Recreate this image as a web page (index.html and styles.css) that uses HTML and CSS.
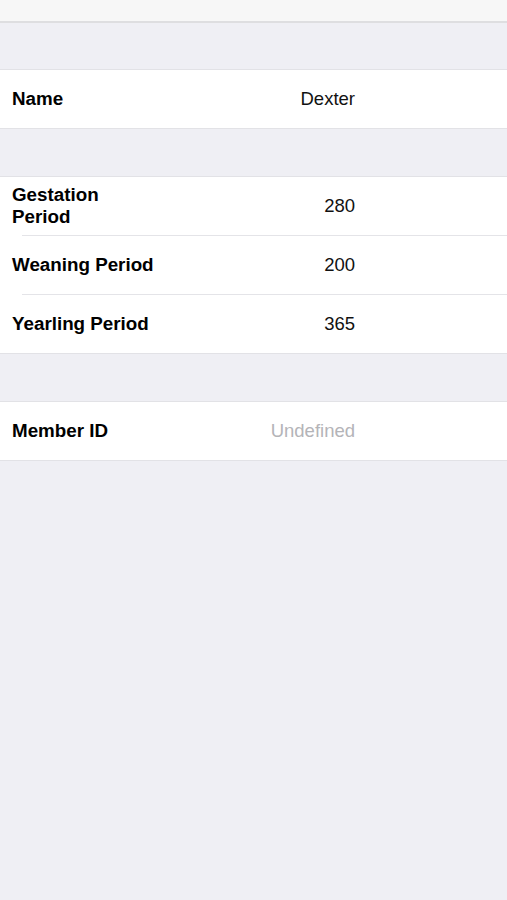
FILE: index.html
```html
<!DOCTYPE html>
<html>
<head>
<meta charset="utf-8">
<link rel="stylesheet" href="styles.css">
</head>
<body>
<div class="topbar"></div>
<div class="section first">
  <div class="row"><div class="label">Name</div><div class="value">Dexter</div></div>
</div>
<div class="section">
  <div class="row"><div class="label">Gestation Period</div><div class="value">280</div></div>
  <div class="row sep"><div class="label">Weaning Period</div><div class="value">200</div></div>
  <div class="row sep"><div class="label">Yearling Period</div><div class="value">365</div></div>
</div>
<div class="section">
  <div class="row"><div class="label">Member ID</div><div class="value placeholder">Undefined</div></div>
</div>
</body>
</html>
```

FILE: styles.css
```css
html, body {
  margin: 0;
  padding: 0;
  background: #efeff4;
  font-family: "Liberation Sans", Arial, sans-serif;
  height: 100%;
}
.topbar {
  height: 21px;
  background: #f7f7f7;
  border-bottom: 2px solid #dedee0;
}
.section {
  margin-top: 47px;
  background: #fff;
  border-top: 1px solid #e2e2e6;
  border-bottom: 1px solid #e2e2e6;
}
.section.first {
  margin-top: 46px;
}
.row {
  display: flex;
  align-items: center;
  height: 58px;
  padding-left: 12px;
  position: relative;
}
.row.sep::before {
  content: "";
  position: absolute;
  left: 22px;
  right: 0;
  top: -1px;
  height: 1px;
  background: #e4e4e8;
}
.row.sep {
  border-top: 1px solid transparent;
}
.label {
  width: 146px;
  font-weight: bold;
  font-size: 18.8px;
  line-height: 22px;
  color: #000;
}
.value {
  width: 197px;
  text-align: right;
  font-size: 18.5px;
  line-height: 22px;
  color: #111;
}
.placeholder {
  color: #b4b4b8;
}
```
